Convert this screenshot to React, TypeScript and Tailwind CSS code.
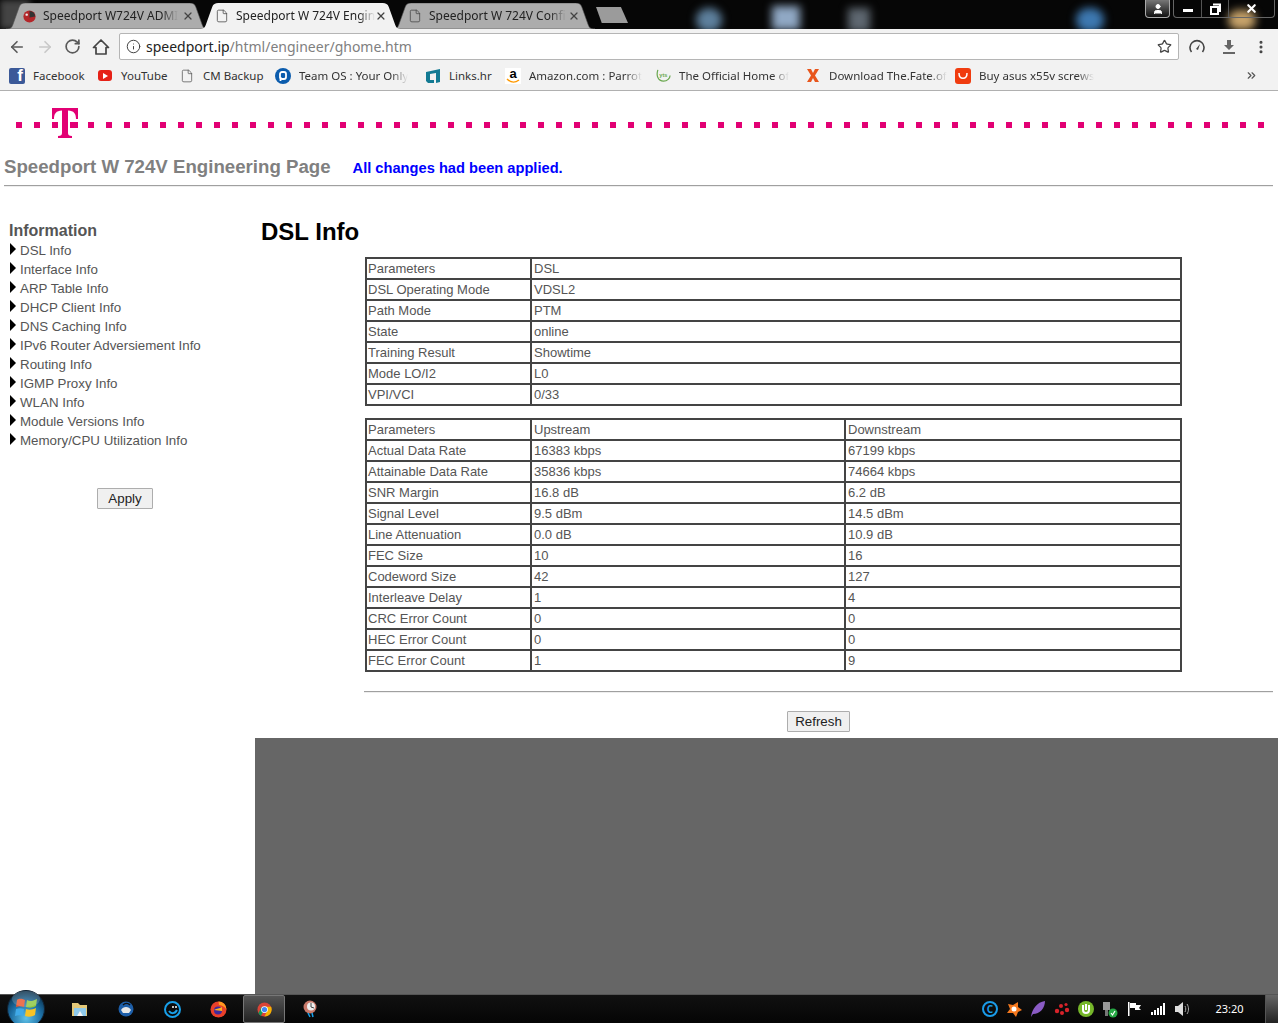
import { ArrowLeft, ArrowRight, RotateCw, Info, Star, MoreVertical, File, X, ChevronsRight, User } from 'lucide-react'
import type { ReactNode } from 'react'

const menuItems = [
  'DSL Info',
  'Interface Info',
  'ARP Table Info',
  'DHCP Client Info',
  'DNS Caching Info',
  'IPv6 Router Adversiement Info',
  'Routing Info',
  'IGMP Proxy Info',
  'WLAN Info',
  'Module Versions Info',
  'Memory/CPU Utilization Info',
]

const dslRows = [
  ['Parameters', 'DSL'],
  ['DSL Operating Mode', 'VDSL2'],
  ['Path Mode', 'PTM'],
  ['State', 'online'],
  ['Training Result', 'Showtime'],
  ['Mode LO/I2', 'L0'],
  ['VPI/VCI', '0/33'],
]

const rateRows = [
  ['Parameters', 'Upstream', 'Downstream'],
  ['Actual Data Rate', '16383 kbps', '67199 kbps'],
  ['Attainable Data Rate', '35836 kbps', '74664 kbps'],
  ['SNR Margin', '16.8 dB', '6.2 dB'],
  ['Signal Level', '9.5 dBm', '14.5 dBm'],
  ['Line Attenuation', '0.0 dB', '10.9 dB'],
  ['FEC Size', '10', '16'],
  ['Codeword Size', '42', '127'],
  ['Interleave Delay', '1', '4'],
  ['CRC Error Count', '0', '0'],
  ['HEC Error Count', '0', '0'],
  ['FEC Error Count', '1', '9'],
]

const dots = Array.from({ length: 70 }, (_, i) => i)

function Tab({ title, active, icon, className }: { title: string; active?: boolean; icon: ReactNode; className: string }) {
  return (
    <div className={`relative flex h-[26px] w-[203px] items-center ${className}`}>
      <svg className="absolute inset-0 h-full w-full" viewBox="0 0 200 26" preserveAspectRatio="none">
        <path
          d="M0 26 C5 26 6 24 7 21 L13 4 C14 1 16 0 19 0 L181 0 C184 0 186 1 187 4 L193 21 C194 24 195 26 200 26 Z"
          fill={active ? '#f2f2f2' : '#acacac'}
          stroke={active ? 'none' : '#555555'}
          strokeWidth="0.6"
        />
      </svg>
      <div className="relative flex w-full items-center pl-[15px] pr-[15px]">
        <span className="flex w-[16px] shrink-0 justify-center">{icon}</span>
        <span className="ml-[6px] whitespace-nowrap text-[12px] text-[#222] [mask-image:linear-gradient(to_right,black_88%,transparent)]">
          {title}
        </span>
        <X size={12} strokeWidth={2.5} className="ml-auto text-[#444]" />
      </div>
    </div>
  )
}

function Bookmark({ label, width, fade, children }: { label: string; width: string; fade?: boolean; children: ReactNode }) {
  return (
    <div className={`flex shrink-0 items-center ${width}`}>
      <span className="flex w-[16px] shrink-0 justify-center">{children}</span>
      <span
        className={`ml-[8px] whitespace-nowrap text-[11.5px] text-[#333] ${
          fade ? '[mask-image:linear-gradient(to_right,black_85%,transparent)]' : ''
        }`}
      >
        {label}
      </span>
    </div>
  )
}

function Triangle() {
  return <span className="mr-[4px] mt-[-3px] h-0 w-0 border-y-[6px] border-l-[6px] border-y-transparent border-l-black" />
}

function DataTable({ rows }: { rows: string[][] }) {
  return (
    <table className="w-[817px] table-fixed border-collapse border-2 border-[#444] text-[13px] text-[#555]">
      <tbody>
        {rows.map((row) => (
          <tr key={row[0] + row[1]} className="h-[21px]">
            {row.map((cell, i) => (
              <td
                key={i}
                className={`border-2 border-[#444] py-0 pr-[2px] leading-[16px] ${
                  i === 0 ? 'w-[165px] pl-[1px]' : row.length === 3 && i === 1 ? 'w-[314px] pl-[2px]' : 'pl-[2px]'
                }`}
              >
                {cell}
              </td>
            ))}
          </tr>
        ))}
      </tbody>
    </table>
  )
}

function TaskSlot({ children }: { children: ReactNode }) {
  return <div className="flex h-full w-[46px] items-center justify-center">{children}</div>
}

function TraySlot({ children }: { children: ReactNode }) {
  return <div className="flex h-full w-[24px] items-center justify-center">{children}</div>
}

export default function App() {
  return (
    <div className="flex h-[1023px] w-[1278px] flex-col overflow-hidden bg-white font-['Liberation_Sans',Arial,sans-serif]">
      {/* tab strip */}
      <div className="relative flex h-[29px] shrink-0 items-end overflow-hidden bg-[#060606] font-['Noto_Sans',sans-serif]">
        <div className="absolute left-0 top-0 h-[29px] w-[30px] bg-[#444] blur-[3px]" />
        <div className="absolute left-[696px] top-[8px] h-[24px] w-[26px] rounded-full bg-[#5d7f9c] blur-[4px]" />
        <div className="absolute left-[772px] top-[6px] h-[24px] w-[28px] bg-[#90a8c4] blur-[4px]" />
        <div className="absolute left-[848px] top-[8px] h-[24px] w-[22px] bg-[#5e6770] blur-[4px]" />
        <div className="absolute left-[1076px] top-[8px] h-[24px] w-[28px] rounded-full bg-[#3d78b0] blur-[4px]" />
        <div className="absolute left-[1228px] top-[10px] h-[20px] w-[28px] rounded-full bg-[#c7a36a] blur-[4px]" />
        <Tab
          className="ml-[6px]"
          title="Speedport W724V ADMI"
          icon={
            <svg width="15" height="15" viewBox="0 0 16 16">
              <circle cx="8" cy="8" r="6.5" fill="#b3262a" />
              <path d="M8 2a6 6 0 0 1 6 6l-6 1z" fill="#333" />
              <circle cx="5" cy="6" r="1.3" fill="#eee" />
            </svg>
          }
        />
        <Tab active className="z-10 ml-[-10px]" title="Speedport W 724V Engin" icon={<File size={14} strokeWidth={1.3} className="text-[#444]" />} />
        <Tab className="ml-[-10px]" title="Speedport W 724V Confi" icon={<File size={14} strokeWidth={1.3} className="text-[#444]" />} />
        <div className="mb-[6px] ml-[1px] h-[16px] w-[32px] self-end bg-[#9b9b9b] [clip-path:polygon(0_0,78%_0,100%_100%,18%_100%)]" />
        <div className="absolute right-[3px] top-0 flex h-[18px] items-stretch gap-[3px] text-white">
          <div className="flex w-[25px] items-center justify-center rounded-b-[4px] border border-t-0 border-[#aaa] bg-[linear-gradient(#777,#111)]">
            <User size={12} fill="white" strokeWidth={2} />
          </div>
          <div className="flex w-[102px] items-stretch rounded-b-[4px] border border-t-0 border-[#666]">
            <div className="flex w-[28px] items-end justify-center border-r border-[#555] pb-[5px]">
              <span className="h-[3px] w-[10px] bg-white" />
            </div>
            <div className="flex w-[27px] items-center justify-center border-r border-[#555]">
              <svg width="11" height="12" viewBox="0 0 11 12">
                <path d="M3 1.5 H10 V8 H8 M1 4 H8 V11 H1 Z" fill="none" stroke="white" strokeWidth="2" />
              </svg>
            </div>
            <div className="flex flex-1 items-center justify-center">
              <X size={13} strokeWidth={4} />
            </div>
          </div>
        </div>
      </div>

      {/* toolbar */}
      <div className="flex h-[33px] shrink-0 items-center bg-[#f2f2f2] pl-[7px] pr-[7px] pt-[2px] text-[#5a5a5a]">
        <div className="flex w-[28px] justify-start pl-[1px]">
          <ArrowLeft size={18} strokeWidth={2.2} />
        </div>
        <div className="flex w-[28px] justify-start pl-[1px]">
          <ArrowRight size={18} strokeWidth={2.2} className="text-[#c8c8c8]" />
        </div>
        <div className="flex w-[28px] justify-start pl-[1px]">
          <RotateCw size={17} strokeWidth={2.4} />
        </div>
        <div className="flex w-[28px] justify-start pl-[1px]">
          <svg width="18" height="18" viewBox="0 0 18 18">
            <path d="M9 2 L16.5 9.5 H14 V16 H4 V9.5 H1.5 Z" fill="none" stroke="#444" strokeWidth="1.7" strokeLinejoin="round" />
          </svg>
        </div>
        <div className="flex h-[27px] w-[1060px] items-center rounded-[2px] border border-[#b5b5b5] bg-white pl-[6px] pr-[6px]">
          <Info size={15} strokeWidth={1.6} className="text-[#444]" />
          <span className="ml-[5px] font-['Noto_Sans',sans-serif] text-[14px] text-[#222]">
            speedport.ip<span className="text-[#808080]">/html/engineer/ghome.htm</span>
          </span>
          <Star size={15} strokeWidth={2} className="ml-auto text-[#444]" />
        </div>
        <div className="ml-[10px] flex w-[32px] justify-start">
          <svg width="16" height="16" viewBox="0 0 16 16">
            <path d="M2.5 13 A7 7 0 1 1 13.5 13" fill="none" stroke="#444" strokeWidth="1.6" />
            <path d="M7 10 L11 5 L9 11 Z" fill="#444" />
          </svg>
        </div>
        <div className="flex w-[32px] justify-start">
          <svg width="16" height="16" viewBox="0 0 16 16">
            <path d="M6 1 H10 V6 H13 L8 11 L3 6 H6 Z" fill="#666" />
            <rect x="2" y="13" width="12" height="2" fill="#666" />
          </svg>
        </div>
        <div className="flex w-[16px] justify-start">
          <MoreVertical size={16} strokeWidth={2.6} className="text-[#444]" />
        </div>
      </div>

      {/* bookmarks */}
      <div className="flex h-[29px] shrink-0 items-center border-b border-[#b0b0b0] bg-[#f2f2f2] pb-[1px] pl-[9px] font-['Noto_Sans',sans-serif]">
        <Bookmark label="Facebook" width="w-[88px]">
          <span className="flex h-[16px] w-[16px] items-end justify-end rounded-[2px] bg-[#3b5998] pr-[2px] font-['Liberation_Sans',sans-serif] text-[17px] font-bold leading-[16px] text-white">f</span>
        </Bookmark>
        <Bookmark label="YouTube" width="w-[82px]">
          <span className="flex h-[11px] w-[14px] items-center justify-center rounded-[3px] bg-[#e62117]">
            <span className="h-0 w-0 border-y-[3px] border-l-[5px] border-y-transparent border-l-white" />
          </span>
        </Bookmark>
        <Bookmark label="CM Backup" width="w-[96px]">
          <File size={14} strokeWidth={1.3} className="text-[#555]" />
        </Bookmark>
        <Bookmark fade label="Team OS : Your Only" width="w-[150px]">
          <svg width="16" height="16" viewBox="0 0 16 16">
            <circle cx="8" cy="8" r="8" fill="#0b5cad" />
            <rect x="5" y="4" width="6" height="7" rx="2" fill="none" stroke="white" strokeWidth="1.8" />
            <path d="M5.5 9v4" stroke="white" strokeWidth="1.8" />
          </svg>
        </Bookmark>
        <Bookmark label="Links.hr" width="w-[80px]">
          <svg width="16" height="16" viewBox="0 0 16 16">
            <path d="M1 4 L15 1 V14 L11 15 V5 L5 6 V12 H9 V15 H3 L1 13 Z" fill="#137a93" />
          </svg>
        </Bookmark>
        <Bookmark fade label="Amazon.com : Parrot" width="w-[150px]">
          <span className="relative flex h-[16px] w-[16px] justify-center bg-white font-['Liberation_Sans',sans-serif] text-[13px] font-bold leading-[12px] text-black">
            a
            <svg className="absolute bottom-0 left-0" width="16" height="6" viewBox="0 0 16 6">
              <path d="M2 1 C6 5 10 5 14 2" fill="none" stroke="#f90" strokeWidth="1.4" />
            </svg>
          </span>
        </Bookmark>
        <Bookmark fade label="The Official Home of" width="w-[150px]">
          <svg width="15" height="15" viewBox="0 0 16 16">
            <path d="M2 2 C0 8 2 14 8 14 C12 14 15 11 15 8" fill="none" stroke="#6aa84f" strokeWidth="1.3" />
            <text x="3.5" y="10" fontSize="6" fontWeight="700" fill="#6aa84f" fontFamily="Liberation Sans, sans-serif">yts</text>
          </svg>
        </Bookmark>
        <Bookmark fade label="Download The.Fate.of" width="w-[150px]">
          <svg width="14" height="15" viewBox="0 0 14 15">
            <path d="M1 1 H5 L7 5 L9 1 H13 L9 7.5 L13 14 H9 L7 10 L5 14 H1 L5 7.5 Z" fill="#e8561c" />
          </svg>
        </Bookmark>
        <Bookmark fade label="Buy asus x55v screws" width="w-[290px]">
          <svg width="16" height="16" viewBox="0 0 16 16">
            <rect width="16" height="16" rx="3" fill="#f03c0f" />
            <path d="M4 5 C4 12 12 12 12 5" fill="none" stroke="white" strokeWidth="1.5" />
          </svg>
        </Bookmark>
        <ChevronsRight size={13} strokeWidth={2.2} className="text-[#555]" />
      </div>

      {/* page */}
      <div className="flex min-h-0 flex-1 flex-col">
        <div className="relative mt-[31px] flex h-[6px] shrink-0 gap-[12px] overflow-hidden pl-[16px]">
          {dots.map((d) => (
            <span key={d} className="h-[6px] w-[6px] shrink-0 bg-[#e20074]" />
          ))}
        </div>
        <svg className="absolute left-[52px] top-[108px]" width="26" height="30" viewBox="0 0 26 30">
          <path d="M0 0 H26 V11 H24 C24 6 22 2.5 16 2.5 V25 C16 27 17 28 20 28 V30 H6 V28 C9 28 10 27 10 25 V2.5 C4 2.5 2 6 2 11 H0 Z" fill="#e20074" />
          <rect x="0" y="14" width="6" height="6" fill="#e20074" />
          <rect x="20" y="14" width="6" height="6" fill="#e20074" />
        </svg>

        <div className="mt-[25px] flex h-[26px] shrink-0 items-baseline pl-[4px]">
          <h1 className="text-[18.67px] font-bold text-[#808080]">Speedport W 724V Engineering Page</h1>
          <span className="ml-[22px] text-[14.67px] font-bold text-[#0000ff]">All changes had been applied.</span>
        </div>
        <div className="ml-[4px] mr-[5px] mt-[6px] h-[2px] shrink-0 border-b border-t border-b-[#eee] border-t-[#a0a0a0]" />

        <div className="flex min-h-0 flex-1">
          <aside className="w-[255px] shrink-0 pl-[9px] pt-[33px]">
            <h2 className="h-[21px] text-[16px] font-bold leading-[21px] text-[#555]">Information</h2>
            <ul className="text-[13.33px] text-[#555]">
              {menuItems.map((item) => (
                <li key={item} className="flex h-[19px] items-center pl-[1px]">
                  <Triangle />
                  {item}
                </li>
              ))}
            </ul>
            <div className="mt-[38px] flex pl-[88px]">
              <button className="h-[21px] w-[56px] rounded-[1px] border border-[#adadad] bg-[#f0f0f0] text-[13.33px] text-[#222]">Apply</button>
            </div>
          </aside>

          <main className="flex min-w-0 flex-1 flex-col">
            <h2 className="mt-[28px] h-[34px] pl-[6px] text-[24px] font-bold leading-[34px] text-black">DSL Info</h2>
            <div className="mt-[8px] flex flex-col gap-[12px] pl-[110px]">
              <DataTable rows={dslRows} />
              <DataTable rows={rateRows} />
            </div>
            <div className="ml-[109px] mr-[5px] mt-[19px] h-[2px] shrink-0 border-b border-t border-b-[#eee] border-t-[#a0a0a0]" />
            <div className="mt-[18px] flex pl-[532px]">
              <button className="h-[21px] w-[63px] rounded-[1px] border border-[#adadad] bg-[#f0f0f0] text-[13.33px] text-[#222]">Refresh</button>
            </div>
            <div className="mt-[6px] flex-1 bg-[#666]" />
          </main>
        </div>
      </div>

      {/* taskbar */}
      <div className="relative flex h-[29px] shrink-0 items-center border-t border-[#555] bg-[linear-gradient(#111,#050505)] font-['Noto_Sans',sans-serif]">
        <div className="w-[57px] shrink-0" />
        <svg className="absolute left-[7px] top-[-5px]" width="38" height="38" viewBox="0 0 38 38">
          <defs>
            <radialGradient id="orb" cx="50%" cy="75%" r="70%">
              <stop offset="0%" stopColor="#5ec1e8" />
              <stop offset="60%" stopColor="#1c6ea4" />
              <stop offset="100%" stopColor="#0c3450" />
            </radialGradient>
          </defs>
          <circle cx="19" cy="19" r="18.5" fill="url(#orb)" stroke="#123" />
          <path d="M10 10 C13 8 15 9 18 10 L17 17 C14 16 12 16 9 17 Z" fill="#e8552b" />
          <path d="M20 10 C23 12 26 11 30 9 L29 16 C26 18 22 18 19 17 Z" fill="#8cc63f" />
          <path d="M9 19 C12 18 14 18 17 19 L16 26 C13 25 11 25 8 26 Z" fill="#3fa9e8" />
          <path d="M19 19 C22 20 25 20 29 18 L28 25 C25 27 21 27 18 26 Z" fill="#f7c325" />
          <ellipse cx="19" cy="9" rx="14" ry="8" fill="white" opacity="0.18" />
        </svg>
        <TaskSlot>
          <svg width="18" height="18" viewBox="0 0 18 18">
            <path d="M1 3 H7 L9 5 H16 V16 H1 Z" fill="#e3c878" />
            <rect x="3" y="8" width="12" height="8" fill="#8fc9ea" />
            <path d="M6 16 L9 11 L12 16 Z" fill="#f2f2f2" />
          </svg>
        </TaskSlot>
        <TaskSlot>
          <svg width="16" height="16" viewBox="0 0 16 16">
            <circle cx="8" cy="8" r="7.5" fill="#1d5ea8" />
            <path d="M3 9 C5 5 11 5 13 9 L11 12 H5 Z" fill="#e8e8e8" />
            <path d="M5 4 C7 2 10 2 12 4" fill="none" stroke="#111" strokeWidth="1.5" />
          </svg>
        </TaskSlot>
        <TaskSlot>
          <svg width="17" height="17" viewBox="0 0 17 17">
            <circle cx="8.5" cy="8.5" r="7.5" fill="none" stroke="#18a0ea" strokeWidth="2" />
            <circle cx="9" cy="6" r="1" fill="#fff" />
            <circle cx="12" cy="6" r="1" fill="#fff" />
            <path d="M5 10 C7 13 11 13 13 9" fill="none" stroke="#18a0ea" strokeWidth="2" />
          </svg>
        </TaskSlot>
        <TaskSlot>
          <svg width="17" height="17" viewBox="0 0 17 17">
            <circle cx="8.5" cy="8.5" r="8" fill="#e8402a" />
            <path d="M8.5 0.5 A8 8 0 0 1 16.5 8.5 C14 5 11 4 9 4 Z" fill="#ff9a1f" />
            <circle cx="8" cy="9.5" r="4" fill="#3d2a9e" />
            <path d="M4 9 C7 7 9 8 12 6 L12 10 Z" fill="#ffb01f" />
          </svg>
        </TaskSlot>
        <div className="ml-[2px] flex h-[28px] w-[42px] items-center justify-center rounded-[2px] border border-[#777] bg-[linear-gradient(#555,#222)]">
          <svg width="15" height="15" viewBox="0 0 16 16">
            <circle cx="8" cy="8" r="7.5" fill="#db4437" />
            <path d="M1.5 12 L5 5 L8 8 L4 15 Z" fill="#0f9d58" />
            <path d="M8 15.5 A7.5 7.5 0 0 0 15 5 H8 L11 9 Z" fill="#f4b400" />
            <circle cx="8" cy="8" r="3.6" fill="#fff" />
            <circle cx="8" cy="8" r="2.8" fill="#4285f4" />
          </svg>
        </div>
        <div className="ml-[2px]">
          <TaskSlot>
            <svg width="17" height="18" viewBox="0 0 17 18">
              <circle cx="8" cy="7" r="6.5" fill="#c9796a" />
              <circle cx="9" cy="6.5" r="4" fill="#eee" />
              <path d="M9 3 V7 L12 8" fill="none" stroke="#444" strokeWidth="1" />
              <path d="M6 13 L8 17 M10 13 L11 17" stroke="#18a0ea" strokeWidth="1.5" />
            </svg>
          </TaskSlot>
        </div>

        <div className="ml-auto flex h-full items-center">
          <TraySlot>
            <span className="flex h-[16px] w-[16px] items-center justify-center rounded-full border-2 border-[#1a9be8] text-[10px] font-bold leading-none text-[#1a9be8]">C</span>
          </TraySlot>
          <TraySlot>
            <svg width="16" height="16" viewBox="0 0 16 16">
              <path d="M2 3 L7 4 L12 1 L12 6 L16 9 L12 11 L10 16 L7 12 L1 12 L4 8 Z" fill="#f5791f" />
              <circle cx="8" cy="8" r="2.5" fill="#fff" />
            </svg>
          </TraySlot>
          <TraySlot>
            <svg width="16" height="18" viewBox="0 0 16 18">
              <path d="M1 17 C2 9 7 2 15 1 C15 8 10 14 3 14 Z" fill="#8a5bc5" />
            </svg>
          </TraySlot>
          <TraySlot>
            <svg width="16" height="14" viewBox="0 0 16 14">
              <g fill="#d8232a">
                <circle cx="3" cy="9" r="2.2" />
                <circle cx="7" cy="4" r="2" />
                <circle cx="8" cy="11" r="2" />
                <circle cx="12" cy="2.5" r="1.6" />
                <circle cx="13" cy="8" r="2.2" />
              </g>
            </svg>
          </TraySlot>
          <TraySlot>
            <svg width="16" height="16" viewBox="0 0 16 16">
              <circle cx="8" cy="8" r="8" fill="#76b72a" />
              <path d="M5 4 V9 C5 11 6 12 8 12 C10 12 11 11 11 9 V4" fill="none" stroke="white" strokeWidth="2" />
              <path d="M8 3 V9" stroke="white" strokeWidth="2" />
            </svg>
          </TraySlot>
          <TraySlot>
            <svg width="16" height="17" viewBox="0 0 16 17">
              <rect x="1" y="1" width="7" height="8" fill="#999" />
              <rect x="3" y="9" width="3" height="6" fill="#777" />
              <circle cx="11" cy="12" r="4.5" fill="#27a845" />
              <path d="M9 12 L10.5 14 L13 10" fill="none" stroke="white" strokeWidth="1.2" />
            </svg>
          </TraySlot>
          <TraySlot>
            <svg width="15" height="16" viewBox="0 0 15 16">
              <rect x="1" y="1" width="1.5" height="14" fill="white" />
              <path d="M3 2 H9 V4 H14 L12 7 L14 9 H8 V7 H3 Z" fill="white" />
            </svg>
          </TraySlot>
          <TraySlot>
            <svg width="15" height="12" viewBox="0 0 15 12">
              <g fill="white">
                <rect x="0" y="9" width="2" height="3" />
                <rect x="3" y="7" width="2" height="5" />
                <rect x="6" y="5" width="2" height="7" />
                <rect x="9" y="3" width="2" height="9" />
                <rect x="12" y="0" width="2" height="12" />
              </g>
            </svg>
          </TraySlot>
          <TraySlot>
            <svg width="15" height="14" viewBox="0 0 15 14">
              <path d="M0 4 H3 L8 0 V14 L3 10 H0 Z" fill="#ddd" />
              <path d="M10 4 C11 6 11 8 10 10 M12 2 C14 5 14 9 12 12" fill="none" stroke="#aaa" strokeWidth="1" />
            </svg>
          </TraySlot>
          <div className="flex h-full w-[71px] items-center justify-center text-[11px] text-white">23:20</div>
          <div className="h-full w-[13px] border-l border-[#555] bg-[linear-gradient(#666,#222)]" />
        </div>
      </div>
    </div>
  )
}
